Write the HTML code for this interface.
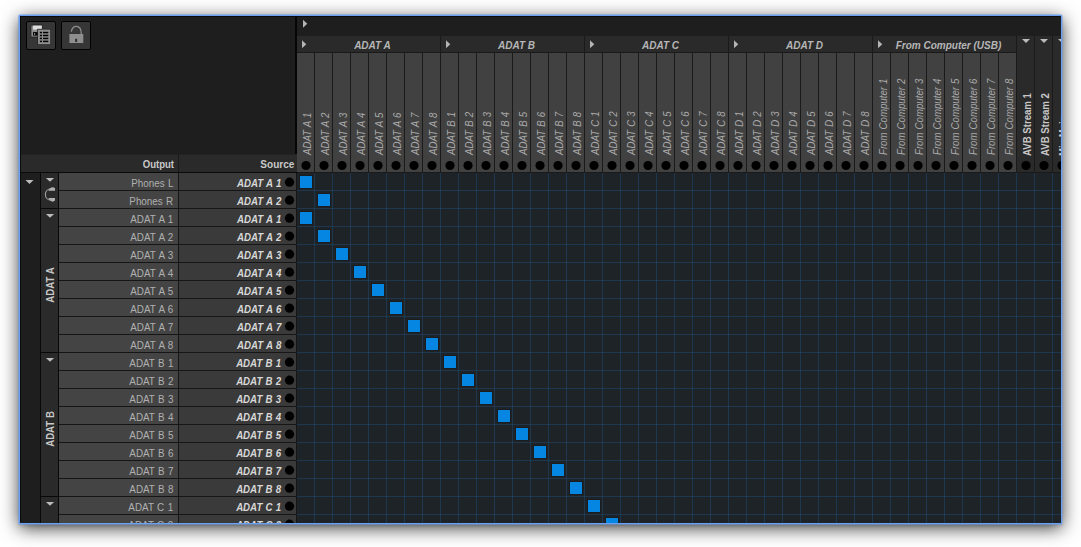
<!DOCTYPE html><html><head><meta charset="utf-8"><title>Routing</title><style>
html,body{margin:0;padding:0;background:#fff;}
body{width:1081px;height:547px;overflow:hidden;position:relative;font-family:"Liberation Sans",sans-serif;font-size:11px;}
#shadow{position:absolute;left:19px;top:15px;width:1043px;height:509px;box-shadow:0 4px 17px rgba(0,0,0,.78),0 2px 3px rgba(0,0,0,.12);}
#bg{position:absolute;left:0;top:0;}
#win{position:absolute;left:21px;top:17px;width:1039.7px;height:505.6px;overflow:hidden;}
#win div,#win span{position:absolute;white-space:nowrap;}
.band{background:#2a2a2a;}
.ch{background:#414141;width:17px;top:36px;height:119px;}
.cg{background:#2a2a2a;top:19px;height:16px;}
.cg b{font-style:italic;color:#b6b6b6;transform:scaleX(.91);}
.vt{height:17px;line-height:17px;transform-origin:0 100%;transform:rotate(-90deg) scaleX(.91);font-size:10.6px;font-style:italic;color:#aaaaaa;word-spacing:0.5px;}
.vb{height:17px;line-height:17px;transform-origin:0 100%;transform:rotate(-90deg) scaleX(.875);font-weight:bold;color:#c8c8c8;}
.o{left:38px;width:119px;height:17px;background:#444;color:#b0b0b0;text-align:right;line-height:17px;}
.o span{right:4.5px;top:2px;font-size:10.6px;transform-origin:100% 50%;transform:scaleX(.93);word-spacing:0.7px;}
.s{left:158px;width:117px;height:17px;background:#3a3a3a;color:#d8d8d8;line-height:17px;font-weight:bold;font-style:italic;}
.s span{right:14.5px;top:2px;transform-origin:100% 50%;transform:scaleX(.88);word-spacing:0.6px;}
.sq{width:12px;height:12px;background:#0586e2;box-shadow:0 0 0 1px #1a1c1e;}
</style></head><body>
<div id="shadow"></div>
<svg id="bg" width="1081" height="547" viewBox="0 0 1081 547"><rect x="18.4" y="14.4" width="1044" height="510" rx="1.5" fill="#6b9ff0"/><rect x="20" y="16" width="1040.8" height="506.8" fill="#0c0b0a"/><rect x="21" y="17" width="1039.7" height="505.7" fill="#1e1e1e"/></svg>
<div id="win">
<div style="left:5px;top:4px;width:28px;height:27px;border:1px solid #020202;border-radius:2px;background:#363636"></div>
<div style="left:40px;top:4px;width:28px;height:27px;border:1px solid #020202;border-radius:2px;background:#363636"></div>
<div class="band" style="left:0;top:137px;width:276px;height:18px;box-sizing:border-box;border-top:1px solid #222"></div>
<div style="left:157px;top:137px;width:1px;height:18px;background:#1a1a1a"></div>
<div style="left:38px;top:137px;width:119px;height:18px;line-height:18px;color:#c8c8c8;font-weight:bold;"><span style="right:4px;top:1px;transform-origin:100% 50%;transform:scaleX(.87)">Output</span></div>
<div style="left:158px;top:137px;width:117px;height:18px;line-height:18px;color:#c8c8c8;font-weight:bold;"><span style="right:2px;top:1px;transform-origin:100% 50%;transform:scaleX(.91)">Source</span></div>
<div style="left:274px;top:0;width:2px;height:137px;background:#060606"></div>
<div style="left:276px;top:19px;width:800px;height:137px;background:#1a1a1a"></div>
<div class="cg" style="left:276px;width:143px"><b style="position:absolute;left:8px;width:135px;text-align:center;top:2px;line-height:14px">ADAT A</b></div>
<div class="cg" style="left:420px;width:143px"><b style="position:absolute;left:8px;width:135px;text-align:center;top:2px;line-height:14px">ADAT B</b></div>
<div class="cg" style="left:564px;width:143px"><b style="position:absolute;left:8px;width:135px;text-align:center;top:2px;line-height:14px">ADAT C</b></div>
<div class="cg" style="left:708px;width:143px"><b style="position:absolute;left:8px;width:135px;text-align:center;top:2px;line-height:14px">ADAT D</b></div>
<div class="cg" style="left:852px;width:143px"><b style="position:absolute;left:8px;width:135px;text-align:center;top:2px;line-height:14px">From Computer (USB)</b></div>
<div class="ch" style="left:276px"></div><span class="vt" style="left:295px;top:120.5px">ADAT A 1</span>
<div class="ch" style="left:294px"></div><span class="vt" style="left:313px;top:120.5px">ADAT A 2</span>
<div class="ch" style="left:312px"></div><span class="vt" style="left:331px;top:120.5px">ADAT A 3</span>
<div class="ch" style="left:330px"></div><span class="vt" style="left:349px;top:120.5px">ADAT A 4</span>
<div class="ch" style="left:348px"></div><span class="vt" style="left:367px;top:120.5px">ADAT A 5</span>
<div class="ch" style="left:366px"></div><span class="vt" style="left:385px;top:120.5px">ADAT A 6</span>
<div class="ch" style="left:384px"></div><span class="vt" style="left:403px;top:120.5px">ADAT A 7</span>
<div class="ch" style="left:402px"></div><span class="vt" style="left:421px;top:120.5px">ADAT A 8</span>
<div class="ch" style="left:420px"></div><span class="vt" style="left:439px;top:120.5px">ADAT B 1</span>
<div class="ch" style="left:438px"></div><span class="vt" style="left:457px;top:120.5px">ADAT B 2</span>
<div class="ch" style="left:456px"></div><span class="vt" style="left:475px;top:120.5px">ADAT B 3</span>
<div class="ch" style="left:474px"></div><span class="vt" style="left:493px;top:120.5px">ADAT B 4</span>
<div class="ch" style="left:492px"></div><span class="vt" style="left:511px;top:120.5px">ADAT B 5</span>
<div class="ch" style="left:510px"></div><span class="vt" style="left:529px;top:120.5px">ADAT B 6</span>
<div class="ch" style="left:528px"></div><span class="vt" style="left:547px;top:120.5px">ADAT B 7</span>
<div class="ch" style="left:546px"></div><span class="vt" style="left:565px;top:120.5px">ADAT B 8</span>
<div class="ch" style="left:564px"></div><span class="vt" style="left:583px;top:120.5px">ADAT C 1</span>
<div class="ch" style="left:582px"></div><span class="vt" style="left:601px;top:120.5px">ADAT C 2</span>
<div class="ch" style="left:600px"></div><span class="vt" style="left:619px;top:120.5px">ADAT C 3</span>
<div class="ch" style="left:618px"></div><span class="vt" style="left:637px;top:120.5px">ADAT C 4</span>
<div class="ch" style="left:636px"></div><span class="vt" style="left:655px;top:120.5px">ADAT C 5</span>
<div class="ch" style="left:654px"></div><span class="vt" style="left:673px;top:120.5px">ADAT C 6</span>
<div class="ch" style="left:672px"></div><span class="vt" style="left:691px;top:120.5px">ADAT C 7</span>
<div class="ch" style="left:690px"></div><span class="vt" style="left:709px;top:120.5px">ADAT C 8</span>
<div class="ch" style="left:708px"></div><span class="vt" style="left:727px;top:120.5px">ADAT D 1</span>
<div class="ch" style="left:726px"></div><span class="vt" style="left:745px;top:120.5px">ADAT D 2</span>
<div class="ch" style="left:744px"></div><span class="vt" style="left:763px;top:120.5px">ADAT D 3</span>
<div class="ch" style="left:762px"></div><span class="vt" style="left:781px;top:120.5px">ADAT D 4</span>
<div class="ch" style="left:780px"></div><span class="vt" style="left:799px;top:120.5px">ADAT D 5</span>
<div class="ch" style="left:798px"></div><span class="vt" style="left:817px;top:120.5px">ADAT D 6</span>
<div class="ch" style="left:816px"></div><span class="vt" style="left:835px;top:120.5px">ADAT D 7</span>
<div class="ch" style="left:834px"></div><span class="vt" style="left:853px;top:120.5px">ADAT D 8</span>
<div class="ch" style="left:852px"></div><span class="vt" style="left:871px;top:120.5px">From Computer 1</span>
<div class="ch" style="left:870px"></div><span class="vt" style="left:889px;top:120.5px">From Computer 2</span>
<div class="ch" style="left:888px"></div><span class="vt" style="left:907px;top:120.5px">From Computer 3</span>
<div class="ch" style="left:906px"></div><span class="vt" style="left:925px;top:120.5px">From Computer 4</span>
<div class="ch" style="left:924px"></div><span class="vt" style="left:943px;top:120.5px">From Computer 5</span>
<div class="ch" style="left:942px"></div><span class="vt" style="left:961px;top:120.5px">From Computer 6</span>
<div class="ch" style="left:960px"></div><span class="vt" style="left:979px;top:120.5px">From Computer 7</span>
<div class="ch" style="left:978px"></div><span class="vt" style="left:997px;top:120.5px">From Computer 8</span>
<div class="band" style="left:996px;top:19px;width:17px;height:136px"></div><span class="vb" style="left:1015.4px;top:121.5px">AVB Stream 1</span>
<div class="band" style="left:1014px;top:19px;width:17px;height:136px"></div><span class="vb" style="left:1033.4px;top:121.5px">AVB Stream 2</span>
<div class="band" style="left:1032px;top:19px;width:17px;height:136px"></div><span class="vb" style="left:1051.4px;top:121.5px">Mix Main</span>
<div style="left:19px;top:156px;width:19px;height:400px;background:#080808"></div>
<div class="band" style="left:20px;top:156px;width:17px;height:35px"></div>
<div class="band" style="left:20px;top:192px;width:17px;height:143px"></div>
<div class="band" style="left:20px;top:336px;width:17px;height:143px"></div>
<div class="band" style="left:20px;top:480px;width:17px;height:143px"></div>
<div style="left:38px;top:155px;width:238px;height:400px;background:#161616"></div>
<div style="left:0px;top:155px;width:277px;height:1px;background:#0a0a0a"></div>
<span class="vb" style="left:37.6px;top:300.5px;width:114.3px;text-align:center">ADAT A</span>
<span class="vb" style="left:37.6px;top:444.5px;width:114.3px;text-align:center">ADAT B</span>
<div style="left:276px;top:156px;width:764px;height:400px;background-color:#1e2328;background-image:linear-gradient(to right,transparent 17px,rgba(30,112,188,.26) 17px),linear-gradient(to bottom,transparent 17px,rgba(30,112,188,.26) 17px);background-size:18px 18px;"></div>
<div class="o" style="top:156px"><span>Phones L</span></div><div class="s" style="top:156px"><span>ADAT A 1</span></div>
<div class="sq" style="left:279px;top:159px"></div>
<div class="o" style="top:174px"><span>Phones R</span></div><div class="s" style="top:174px"><span>ADAT A 2</span></div>
<div class="sq" style="left:297px;top:177px"></div>
<div class="o" style="top:192px"><span>ADAT A 1</span></div><div class="s" style="top:192px"><span>ADAT A 1</span></div>
<div class="sq" style="left:279px;top:195px"></div>
<div class="o" style="top:210px"><span>ADAT A 2</span></div><div class="s" style="top:210px"><span>ADAT A 2</span></div>
<div class="sq" style="left:297px;top:213px"></div>
<div class="o" style="top:228px"><span>ADAT A 3</span></div><div class="s" style="top:228px"><span>ADAT A 3</span></div>
<div class="sq" style="left:315px;top:231px"></div>
<div class="o" style="top:246px"><span>ADAT A 4</span></div><div class="s" style="top:246px"><span>ADAT A 4</span></div>
<div class="sq" style="left:333px;top:249px"></div>
<div class="o" style="top:264px"><span>ADAT A 5</span></div><div class="s" style="top:264px"><span>ADAT A 5</span></div>
<div class="sq" style="left:351px;top:267px"></div>
<div class="o" style="top:282px"><span>ADAT A 6</span></div><div class="s" style="top:282px"><span>ADAT A 6</span></div>
<div class="sq" style="left:369px;top:285px"></div>
<div class="o" style="top:300px"><span>ADAT A 7</span></div><div class="s" style="top:300px"><span>ADAT A 7</span></div>
<div class="sq" style="left:387px;top:303px"></div>
<div class="o" style="top:318px"><span>ADAT A 8</span></div><div class="s" style="top:318px"><span>ADAT A 8</span></div>
<div class="sq" style="left:405px;top:321px"></div>
<div class="o" style="top:336px"><span>ADAT B 1</span></div><div class="s" style="top:336px"><span>ADAT B 1</span></div>
<div class="sq" style="left:423px;top:339px"></div>
<div class="o" style="top:354px"><span>ADAT B 2</span></div><div class="s" style="top:354px"><span>ADAT B 2</span></div>
<div class="sq" style="left:441px;top:357px"></div>
<div class="o" style="top:372px"><span>ADAT B 3</span></div><div class="s" style="top:372px"><span>ADAT B 3</span></div>
<div class="sq" style="left:459px;top:375px"></div>
<div class="o" style="top:390px"><span>ADAT B 4</span></div><div class="s" style="top:390px"><span>ADAT B 4</span></div>
<div class="sq" style="left:477px;top:393px"></div>
<div class="o" style="top:408px"><span>ADAT B 5</span></div><div class="s" style="top:408px"><span>ADAT B 5</span></div>
<div class="sq" style="left:495px;top:411px"></div>
<div class="o" style="top:426px"><span>ADAT B 6</span></div><div class="s" style="top:426px"><span>ADAT B 6</span></div>
<div class="sq" style="left:513px;top:429px"></div>
<div class="o" style="top:444px"><span>ADAT B 7</span></div><div class="s" style="top:444px"><span>ADAT B 7</span></div>
<div class="sq" style="left:531px;top:447px"></div>
<div class="o" style="top:462px"><span>ADAT B 8</span></div><div class="s" style="top:462px"><span>ADAT B 8</span></div>
<div class="sq" style="left:549px;top:465px"></div>
<div class="o" style="top:480px"><span>ADAT C 1</span></div><div class="s" style="top:480px"><span>ADAT C 1</span></div>
<div class="sq" style="left:567px;top:483px"></div>
<div class="o" style="top:498px"><span>ADAT C 2</span></div><div class="s" style="top:498px"><span>ADAT C 2</span></div>
<div class="sq" style="left:585px;top:501px"></div>
<svg style="position:absolute;left:0;top:0" width="1040" height="506" viewBox="21 17 1040 506"><path d="M303 19.7L307.3 23.7L303 27.7Z" fill="#b4b4b4"/><path d="M302 40.2L306.3 44.2L302 48.2Z" fill="#b4b4b4"/><path d="M446 40.2L450.3 44.2L446 48.2Z" fill="#b4b4b4"/><path d="M590 40.2L594.3 44.2L590 48.2Z" fill="#b4b4b4"/><path d="M734 40.2L738.3 44.2L734 48.2Z" fill="#b4b4b4"/><path d="M878 40.2L882.3 44.2L878 48.2Z" fill="#b4b4b4"/><path d="M1022 39L1030 39L1026.0 43Z" fill="#bcbcbc"/><path d="M1040 39L1048 39L1044.0 43Z" fill="#bcbcbc"/><path d="M1058 39L1066 39L1062.0 43Z" fill="#bcbcbc"/><path d="M25.5 180L33.5 180L29.5 184Z" fill="#bcbcbc"/><path d="M45.9 178L54.099999999999994 178L50.0 181.8Z" fill="#bcbcbc"/><path d="M45.9 214L54.099999999999994 214L50.0 217.8Z" fill="#bcbcbc"/><path d="M45.9 358L54.099999999999994 358L50.0 361.8Z" fill="#bcbcbc"/><path d="M45.9 502L54.099999999999994 502L50.0 505.8Z" fill="#bcbcbc"/><circle cx="306" cy="165.5" r="4.6" fill="#000"/><circle cx="324" cy="165.5" r="4.6" fill="#000"/><circle cx="342" cy="165.5" r="4.6" fill="#000"/><circle cx="360" cy="165.5" r="4.6" fill="#000"/><circle cx="378" cy="165.5" r="4.6" fill="#000"/><circle cx="396" cy="165.5" r="4.6" fill="#000"/><circle cx="414" cy="165.5" r="4.6" fill="#000"/><circle cx="432" cy="165.5" r="4.6" fill="#000"/><circle cx="450" cy="165.5" r="4.6" fill="#000"/><circle cx="468" cy="165.5" r="4.6" fill="#000"/><circle cx="486" cy="165.5" r="4.6" fill="#000"/><circle cx="504" cy="165.5" r="4.6" fill="#000"/><circle cx="522" cy="165.5" r="4.6" fill="#000"/><circle cx="540" cy="165.5" r="4.6" fill="#000"/><circle cx="558" cy="165.5" r="4.6" fill="#000"/><circle cx="576" cy="165.5" r="4.6" fill="#000"/><circle cx="594" cy="165.5" r="4.6" fill="#000"/><circle cx="612" cy="165.5" r="4.6" fill="#000"/><circle cx="630" cy="165.5" r="4.6" fill="#000"/><circle cx="648" cy="165.5" r="4.6" fill="#000"/><circle cx="666" cy="165.5" r="4.6" fill="#000"/><circle cx="684" cy="165.5" r="4.6" fill="#000"/><circle cx="702" cy="165.5" r="4.6" fill="#000"/><circle cx="720" cy="165.5" r="4.6" fill="#000"/><circle cx="738" cy="165.5" r="4.6" fill="#000"/><circle cx="756" cy="165.5" r="4.6" fill="#000"/><circle cx="774" cy="165.5" r="4.6" fill="#000"/><circle cx="792" cy="165.5" r="4.6" fill="#000"/><circle cx="810" cy="165.5" r="4.6" fill="#000"/><circle cx="828" cy="165.5" r="4.6" fill="#000"/><circle cx="846" cy="165.5" r="4.6" fill="#000"/><circle cx="864" cy="165.5" r="4.6" fill="#000"/><circle cx="882" cy="165.5" r="4.6" fill="#000"/><circle cx="900" cy="165.5" r="4.6" fill="#000"/><circle cx="918" cy="165.5" r="4.6" fill="#000"/><circle cx="936" cy="165.5" r="4.6" fill="#000"/><circle cx="954" cy="165.5" r="4.6" fill="#000"/><circle cx="972" cy="165.5" r="4.6" fill="#000"/><circle cx="990" cy="165.5" r="4.6" fill="#000"/><circle cx="1008" cy="165.5" r="4.6" fill="#000"/><circle cx="1026" cy="165.5" r="4.6" fill="#000"/><circle cx="1044" cy="165.5" r="4.6" fill="#000"/><circle cx="1062" cy="165.5" r="4.6" fill="#000"/><circle cx="289.5" cy="182.2" r="4.6" fill="#000"/><circle cx="289.5" cy="200.2" r="4.6" fill="#000"/><circle cx="289.5" cy="218.2" r="4.6" fill="#000"/><circle cx="289.5" cy="236.2" r="4.6" fill="#000"/><circle cx="289.5" cy="254.2" r="4.6" fill="#000"/><circle cx="289.5" cy="272.2" r="4.6" fill="#000"/><circle cx="289.5" cy="290.2" r="4.6" fill="#000"/><circle cx="289.5" cy="308.2" r="4.6" fill="#000"/><circle cx="289.5" cy="326.2" r="4.6" fill="#000"/><circle cx="289.5" cy="344.2" r="4.6" fill="#000"/><circle cx="289.5" cy="362.2" r="4.6" fill="#000"/><circle cx="289.5" cy="380.2" r="4.6" fill="#000"/><circle cx="289.5" cy="398.2" r="4.6" fill="#000"/><circle cx="289.5" cy="416.2" r="4.6" fill="#000"/><circle cx="289.5" cy="434.2" r="4.6" fill="#000"/><circle cx="289.5" cy="452.2" r="4.6" fill="#000"/><circle cx="289.5" cy="470.2" r="4.6" fill="#000"/><circle cx="289.5" cy="488.2" r="4.6" fill="#000"/><circle cx="289.5" cy="506.2" r="4.6" fill="#000"/><circle cx="289.5" cy="524.2" r="4.6" fill="#000"/><path d="M51.5 188.7 C47.3 188.7 45.4 191.6 45.4 194.4 C45.4 197.2 47.3 200.2 51.5 200.2" fill="none" stroke="#a4a4a4" stroke-width="1.1"/><path d="M48.4 190.7 C49.6 187.4 53 186 55 188.3 L55 190.7 Z M48.4 198.1 C49.6 201.4 53 202.8 55 200.5 L55 198.1 Z" fill="#b0b0b0"/><path d="M32.6 24.9H42.3V37.1H30.9V26.6Z" fill="#8c8c8c" stroke="#1f1f1f" stroke-width="0.9"/><rect x="33.1" y="25.7" width="8.7" height="3.9" fill="#dedede"/><rect x="33" y="32.1" width="5.5" height="3.5" fill="#000"/><rect x="34.2" y="33" width="0.9" height="2" fill="#999"/><rect x="37.2" y="28.8" width="13.6" height="16" fill="#262626"/><rect x="38" y="29.6" width="12.2" height="14.6" fill="#8c8c8c"/><rect x="39.9" y="31.80" width="2.1" height="1.5" fill="#000"/><rect x="43" y="31.80" width="5.3" height="1.5" fill="#000"/><rect x="39.9" y="34.75" width="2.1" height="1.5" fill="#000"/><rect x="43" y="34.75" width="5.3" height="1.5" fill="#000"/><rect x="39.9" y="37.70" width="2.1" height="1.5" fill="#000"/><rect x="43" y="37.70" width="5.3" height="1.5" fill="#000"/><rect x="39.9" y="40.65" width="2.1" height="1.5" fill="#000"/><rect x="43" y="40.65" width="5.3" height="1.5" fill="#000"/><rect x="69.4" y="34" width="13.9" height="9" fill="#8e8e8e"/><rect x="75.2" y="38.8" width="1.9" height="3.2" fill="#2a2a2a"/><path d="M71.3 31.6 C72 28 74 26.4 76.2 26.4 C79.5 26.4 81.3 29 81.3 34" fill="none" stroke="#8e8e8e" stroke-width="1.3"/></svg>
</div></body></html>
